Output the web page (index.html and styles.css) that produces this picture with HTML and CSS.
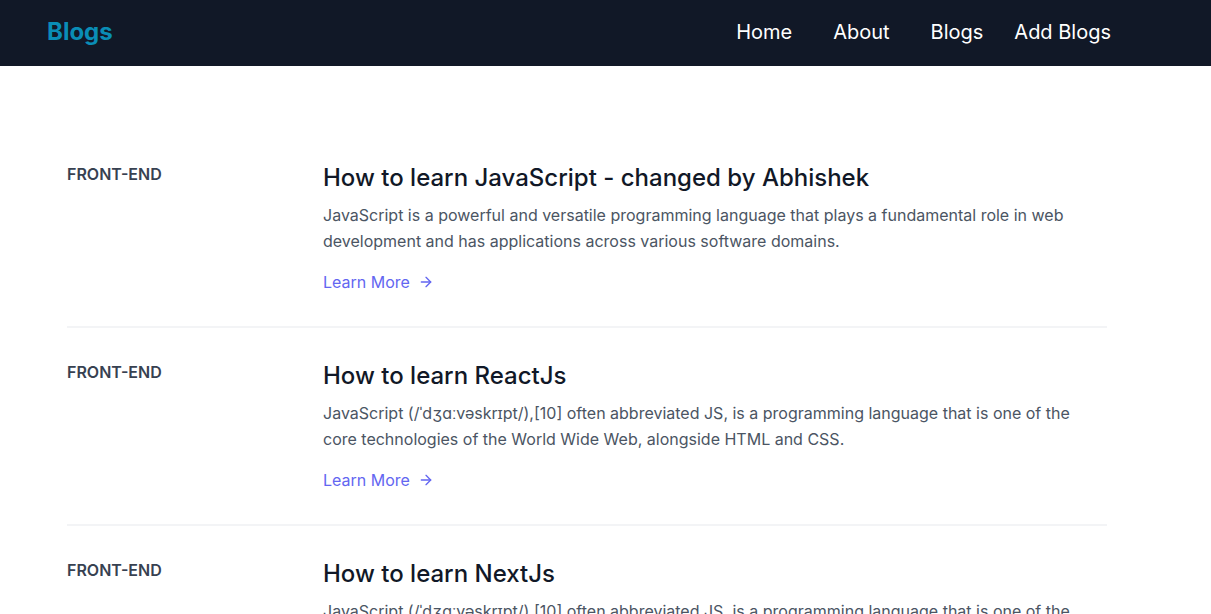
FILE: index.html
```html
<!DOCTYPE html>
<html lang="en">
<head>
<meta charset="utf-8">
<title>Blogs</title>
<link rel="stylesheet" href="styles.css">
</head>
<body>
<header class="navbar">
  <a class="logo" href="#">Blogs</a>
  <nav class="nav-links">
    <a class="nav-link" href="#">Home</a>
    <a class="nav-link about" href="#">About</a>
    <a class="nav-link blogs" href="#">Blogs</a>
    <a class="nav-link add" href="#">Add Blogs</a>
  </nav>
</header>
<main class="container">
  <div class="list">
    <article class="item">
      <div class="category"><span>FRONT-END</span></div>
      <div class="body">
        <h2 class="title">How to learn JavaScript - changed by Abhishek</h2>
        <p class="text">JavaScript is a powerful and versatile programming language that plays a fundamental role in web development and has applications across various software domains.</p>
        <a class="more" href="#">Learn More
          <svg class="arrow" viewBox="0 0 24 24" fill="none" stroke="currentColor" stroke-width="2" stroke-linecap="round" stroke-linejoin="round"><path d="M5 12h14"/><path d="M12 5l7 7-7 7"/></svg>
        </a>
      </div>
    </article>
    <article class="item">
      <div class="category"><span>FRONT-END</span></div>
      <div class="body">
        <h2 class="title">How to learn ReactJs</h2>
        <p class="text">JavaScript (/ˈdʒɑːvəskrɪpt/),[10] often abbreviated JS, is a programming language that is one of the core technologies of the World Wide Web, alongside HTML and CSS.</p>
        <a class="more" href="#">Learn More
          <svg class="arrow" viewBox="0 0 24 24" fill="none" stroke="currentColor" stroke-width="2" stroke-linecap="round" stroke-linejoin="round"><path d="M5 12h14"/><path d="M12 5l7 7-7 7"/></svg>
        </a>
      </div>
    </article>
    <article class="item">
      <div class="category"><span>FRONT-END</span></div>
      <div class="body">
        <h2 class="title">How to learn NextJs</h2>
        <p class="text">JavaScript (/ˈdʒɑːvəskrɪpt/),[10] often abbreviated JS, is a programming language that is one of the core technologies of the World Wide Web, alongside HTML and CSS.</p>
        <a class="more" href="#">Learn More
          <svg class="arrow" viewBox="0 0 24 24" fill="none" stroke="currentColor" stroke-width="2" stroke-linecap="round" stroke-linejoin="round"><path d="M5 12h14"/><path d="M12 5l7 7-7 7"/></svg>
        </a>
      </div>
    </article>
  </div>
</main>
</body>
</html>
```

FILE: styles.css
```css
* { box-sizing: border-box; }

body {
  margin: 0;
  font-family: Inter, "Noto Sans", sans-serif;
  background: #ffffff;
  color: #111827;
}

a { text-decoration: none; }

.navbar {
  height: 66px;
  background: #111827;
  display: flex;
  align-items: center;
  justify-content: space-between;
  padding: 0 100px 2px 47px;
}

.logo {
  color: #0a8db6;
  font-size: 24px;
  font-weight: 700;
  line-height: 32px;
}

.nav-links {
  display: flex;
  align-items: center;
}

.nav-link {
  color: #ffffff;
  font-size: 20px;
  line-height: 28px;
}

.about { margin-left: 41px; }
.blogs { margin-left: 41px; }
.add { margin-left: 31px; }

.container {
  padding: 96px 104px 0 67px;
}

.list {
  margin-top: -32px;
}

.item {
  display: flex;
  padding: 32px 0;
  border-top: 2px solid #f3f4f6;
}

.item:first-child { border-top: none; }

.category {
  width: 256px;
  flex-shrink: 0;
  display: flex;
  flex-direction: column;
  font-weight: 600;
  font-size: 16px;
  line-height: 24px;
  color: #374151;
}

.body { flex-grow: 1; }

.title {
  margin: 0 0 8px;
  font-size: 24px;
  line-height: 32px;
  font-weight: 500;
  color: #111827;
}

.text {
  margin: 0;
  font-size: 16px;
  line-height: 26px;
  color: #4b5563;
}

.more {
  display: inline-flex;
  align-items: center;
  margin-top: 16px;
  color: #6366f1;
  font-size: 16px;
  line-height: 24px;
}

.arrow {
  width: 16px;
  height: 16px;
  margin-left: 8px;
}
```
